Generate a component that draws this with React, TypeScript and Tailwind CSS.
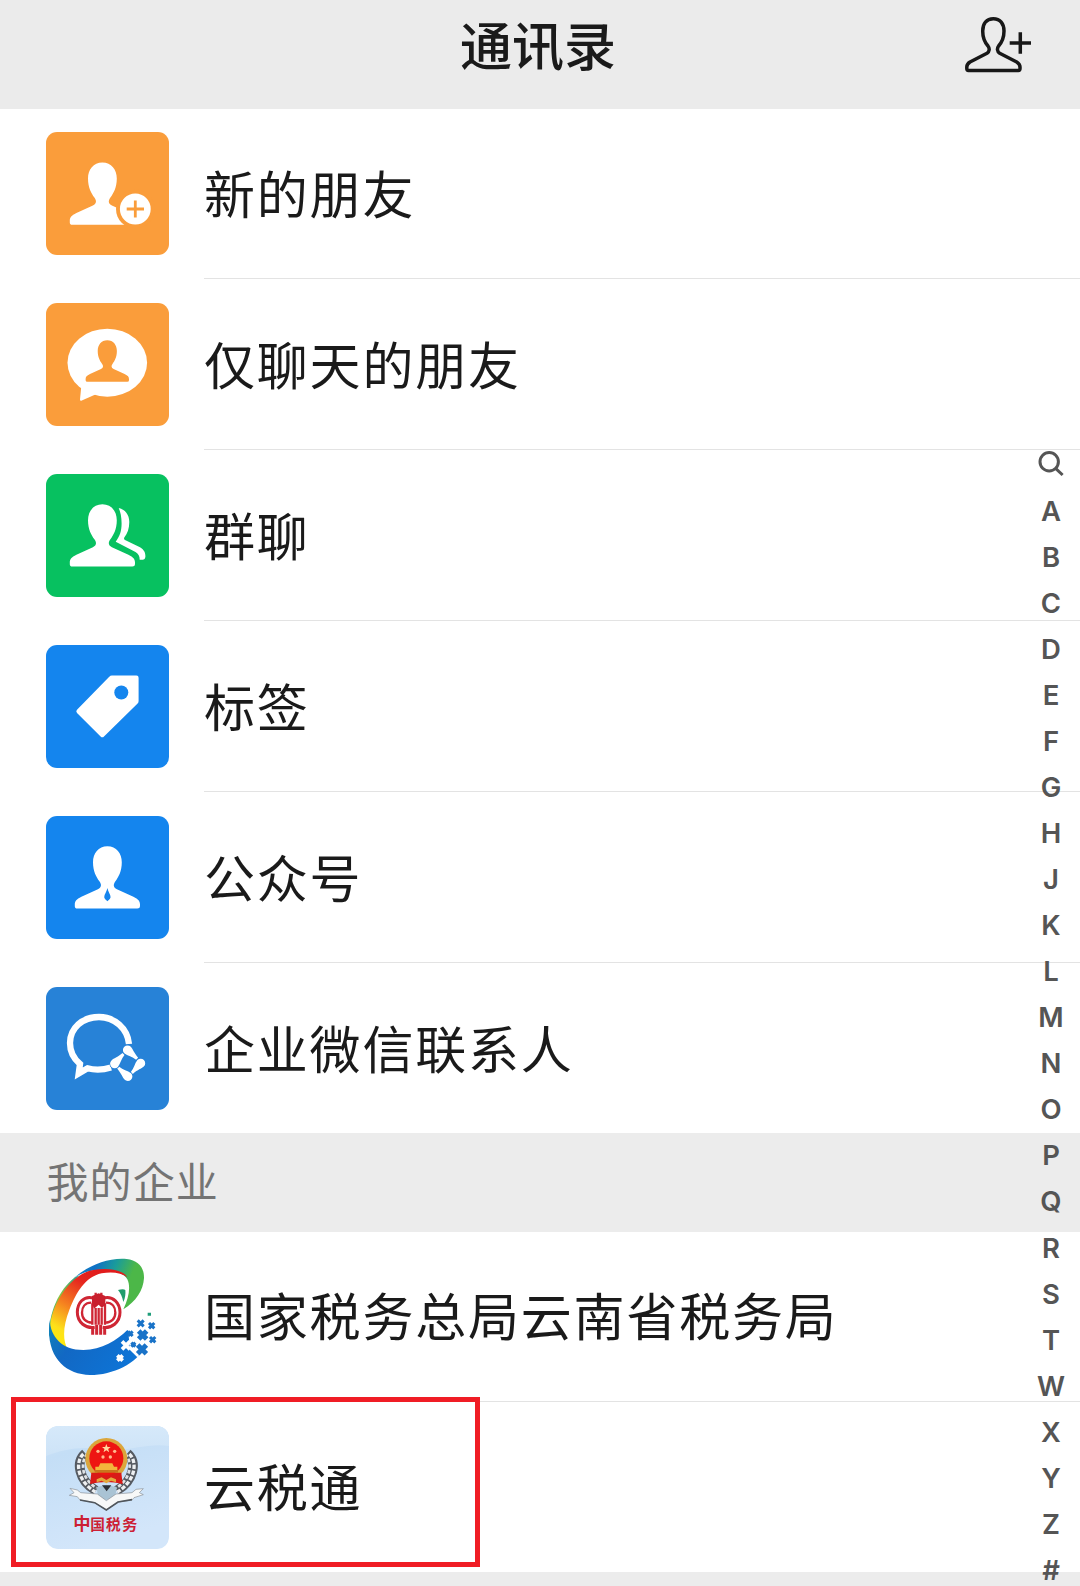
import type { ReactNode } from "react";

const LETTERS = "ABCDEFGHJKLMNOPQRSTWXYZ#".split("");

const PERSON =
	"M0 30C9 30 14.4 37 14.4 46C14.4 55 11 61 8 65C5.6 68.5 5.8 71 9.5 73L26 80.5C31 83 32.6 85 32.6 88V90Q32.6 92.3 30 92.3H-30Q-32.6 92.3 -32.6 90V88C-32.6 85 -31 83 -26 80.5L-9.5 73C-5.8 71 -5.6 68.5 -8 65C-11 61 -14.4 55 -14.4 46C-14.4 37 -9 30 0 30Z";

function AddContactIcon() {
	return (
		<svg className="h-20 w-[90px]" viewBox="0 0 90 80" fill="none" stroke="#181818" strokeWidth="3.5">
			<path
				strokeLinejoin="round"
				d="M38.3 13.7C31.5 13.7 27.7 18.8 27.7 26C27.7 33 30 37.6 33 41C34.8 43.3 34.6 46.6 32 48.3L15 57C12.5 58.6 11.8 60 11.8 62V63.5Q11.8 65.4 13.5 65.4H63.3Q65 65.4 65 63.5V62C65 60 64.2 58.6 61.7 57L44.7 48.3C42 46.6 41.9 43.3 43.6 41C46.6 37.6 49 33 49 26C49 18.8 45.2 13.7 38.3 13.7Z"
			/>
			<path d="M54.7 38.1H76M65.3 27.3V48.7" />
		</svg>
	);
}

function NewFriendIcon() {
	return (
		<svg viewBox="0 0 123 123">
			<path d={PERSON} fill="#fff" transform="translate(56.4 .4)" />
			<circle cx="89.3" cy="77" r="19.3" fill="#fa9d3b" />
			<circle cx="89.3" cy="77" r="15.4" fill="#fff" />
			<path d="M80.7 77H98M89.3 68.5V85.5" stroke="#fa9d3b" strokeWidth="2.8" />
		</svg>
	);
}

function ChatOnlyIcon() {
	return (
		<svg viewBox="0 0 123 123">
			<ellipse cx="61.3" cy="59.7" rx="39.8" ry="34" fill="#fff" />
			<path d="M35.5 81L34 96.5Q34 98.3 35.8 97.6L50 91.3Z" fill="#fff" />
			<path d={PERSON} fill="#fa9d3b" transform="translate(61.3 17.4) scale(.665)" />
		</svg>
	);
}

function GroupIcon() {
	return (
		<svg viewBox="0 0 123 123" fill="#fff">
			<path d={PERSON} transform="translate(56.4 .3)" />
			<path d="M72.7 34C79 35.5 83.3 40.5 83.3 48C83.3 54.5 81.5 59.5 78.3 63.5C77.8 64.5 78 65.3 79 66L94 73.3C98.3 76 99.6 79 99.4 83Q99 85.8 97 85.8H93.7C93.7 82 92.5 79.8 89.5 78L69.7 67.7C73.5 62.5 75.6 57.5 75.6 49.5C75.6 43 74.5 38 72.7 34Z" />
		</svg>
	);
}

function TagIcon() {
	return (
		<svg viewBox="0 0 123 123">
			<path
				d="M66 30.6H90.5Q92.6 30.6 92.6 32.7V56Q92.6 57.5 91.6 58.6L58 91.5Q56.3 93.2 54.6 91.5L31 68Q29.5 66.3 31 64.7L63 32Q64.3 30.6 66 30.6Z"
				fill="#fff"
			/>
			<circle cx="75.3" cy="47.5" r="7" fill="#1485ee" />
		</svg>
	);
}

function OfficialIcon() {
	return (
		<svg viewBox="0 0 123 123">
			<path d={PERSON} fill="#fff" transform="translate(61.4 .2)" />
			<path d="M61.4 72C62 75.5 64.6 78.5 64.6 81.2Q64.2 83.6 61.4 85.3Q58.6 83.6 58.2 81.2C58.2 78.5 60.8 75.5 61.4 72Z" fill="#1485ee" />
		</svg>
	);
}

function WeComIcon() {
	const drop = "M0 -4.6A4.6 4.6 0 0 1 4.6 0C4.4 3.5 2.8 6 2.2 13H-.6C-1 8 -4 4.5 -4.6 0A4.6 4.6 0 0 1 0 -4.6Z";
	return (
		<svg viewBox="0 0 123 123">
			<path
				d="M83 57C81.5 41.5 68.5 30 53 30C36.5 30 24 41 24 56C24 65 27.5 71.5 34 77L32.7 86.5L41.5 81.3C49 83.3 57 83 65 80.6"
				fill="none"
				stroke="#fff"
				strokeWidth="6.3"
			/>
			<g fill="#fff" stroke="#2782d7" strokeWidth="1.2" paintOrder="stroke">
				<path d={drop} transform="translate(81.5 63) rotate(-44)" />
				<path d={drop} transform="translate(94.6 76.3) rotate(46)" />
				<path d={drop} transform="translate(81.8 89.4) rotate(136)" />
				<path d={drop} transform="translate(68.7 76.7) rotate(-134)" />
			</g>
		</svg>
	);
}

function YunnanTaxLogo() {
	return (
		<svg viewBox="48 48 369 369">
			<defs>
				<linearGradient id="band" x1="0" y1="1" x2="0.6" y2="0">
					<stop offset="0" stopColor="#fff200" />
					<stop offset="0.25" stopColor="#fde01a" />
					<stop offset="0.5" stopColor="#f58220" />
					<stop offset="0.8" stopColor="#e6261f" />
					<stop offset="1" stopColor="#e11b1b" />
				</linearGradient>
				<linearGradient id="cap" x1="0" y1="0" x2="1" y2="0.3">
					<stop offset="0" stopColor="#1a9ac0" />
					<stop offset="0.35" stopColor="#0f6fc5" />
					<stop offset="0.6" stopColor="#1a9c9a" />
					<stop offset="0.85" stopColor="#4cb748" />
				</linearGradient>
				<linearGradient id="left" x1="1" y1="0" x2="0" y2="1">
					<stop offset="0" stopColor="#2a9d8f" />
					<stop offset="0.5" stopColor="#8cc63f" />
					<stop offset="1" stopColor="#00a99d" />
				</linearGradient>
				<linearGradient id="base" x1="0" y1="0" x2="1" y2="0.4">
					<stop offset="0" stopColor="#0f83b8" />
					<stop offset="0.35" stopColor="#1268c4" />
					<stop offset="1" stopColor="#0d74d6" />
				</linearGradient>
			</defs>
			<path d="M120 125C165 80 230 52 290 57C325 61 343 82 342 115C340 150 318 185 280 208C296 175 303 140 292 118C280 96 245 88 205 90C165 93 140 105 120 125Z" fill="url(#cap)" />
			<path d="M150 105C105 150 70 200 62 280L57 290C56 220 85 150 135 112Z" fill="url(#left)" />
			<path d="M292 112C280 90 235 82 190 90C130 98 66 185 60 258C62 300 80 325 114 330C96 300 100 255 118 210C140 155 165 112 215 100C245 94 275 98 292 112Z" fill="url(#band)" />
			<path d="M59 240C62 290 95 330 160 330C215 330 262 300 292 270L345 320C320 370 250 405 180 405C105 403 45 350 59 240Z" fill="url(#base)" />
			<path d="M264 150Q280 146 286 150Q288 170 280 186Q276 164 264 150Z" fill="#1f9d6c" />
			{/* coin emblem */}
			<g fill="none" stroke="#cf2634">
				<path d="M190 174C160 166 142 190 142 217C142 248 168 266 194 262M220 174C250 166 270 190 270 217C270 248 244 266 218 262" strokeWidth="9" />
				<path d="M184 188C164 188 156 202 156 218C156 236 168 248 186 248M228 188C248 188 256 202 256 218C256 236 244 248 226 248" strokeWidth="7" />
				<path d="M187 190V254M197 158V176M214 158V176M197 204V254M206 204V254M215 204V254M225 190V254" strokeWidth="7" />
				<path d="M188 258V284M200 254V284M212 254V284M224 258V284" strokeWidth="9" />
			</g>
			<path d="M186 168L206 160L226 168V194L216 204L206 194L192 206L186 190Z" fill="#c91f2d" />
			{/* puzzle pixels */}
			<path d="M294 266L322 262L346 322L322 352L300 330Z" fill="#fff" />
			<g stroke="#fff" strokeWidth="11">
				<path d="M276 304L300 328M300 304L276 328" />
				<path d="M262 346L278 362M278 346L262 362" />
			</g>
			<g stroke="#1a73c8" strokeWidth="9">
				<path d="M323 241L341 259M341 241L323 259M357 249L373 265M373 249L357 265M360 291L376 307M376 291L360 307M294 274L308 288M308 274L294 288M304 308L316 320M316 308L304 320" />
				<path d="M326 273L350 297M350 273L326 297M323 315L349 341M349 315L323 341" strokeWidth="15" />
			</g>
			<path d="M353 218H363V227H353Z" fill="#1f9d7a" />
		</svg>
	);
}

function ChinaTaxLogo() {
	return (
		<svg className="rounded-[12px]" viewBox="-42 0 369 369">
			<defs>
				<linearGradient id="sky" x1="0" y1="0" x2="0.3" y2="1">
					<stop offset="0" stopColor="#cfe4f7" />
					<stop offset="0.25" stopColor="#c4def6" />
					<stop offset="1" stopColor="#d3e6fa" />
				</linearGradient>
				<linearGradient id="haze" x1="0" y1="0" x2="0" y2="1">
					<stop offset="0" stopColor="#d6e9fa" />
					<stop offset="1" stopColor="#cde3f7" />
				</linearGradient>
			</defs>
			<path d="M-42 0H327V369H-42Z" fill="url(#sky)" />
			<path d="M-42 0H327V60C260 50 200 80 130 70C60 60 10 70 -42 90Z" fill="url(#haze)" />
			{/* wheat ears */}
			<g fill="none">
				<path d="M76 82C46 108 56 164 108 194M202 82C232 108 222 164 170 194" stroke="#565b62" strokeWidth="29" />
				<path d="M70 84C44 108 52 166 106 198M208 84C234 108 226 166 172 198" stroke="#eef0f2" strokeWidth="10" strokeDasharray="13 5" />
				<path d="M82 84C60 108 64 160 110 186M196 84C218 108 214 160 168 186" stroke="#dfe2e5" strokeWidth="8" strokeDasharray="11 6" />
			</g>
			{/* national emblem */}
			<circle cx="139" cy="99" r="63" fill="#dba63c" />
			<path d="M94 140L90 174Q139 162 188 174L184 140Z" fill="#d91a17" />
			<circle cx="139" cy="97" r="51" fill="#ee1512" />
			<path d="M139 54L142.500 63H152L144.500 69L147.500 79L139 73L130.500 79L133.500 69L126 63H135.500Z" fill="#ffd8a0" />
			<g fill="#ffb98c">
				<circle cx="114" cy="76" r="5" />
				<circle cx="164" cy="76" r="5" />
				<circle cx="129" cy="93" r="5" />
				<circle cx="151" cy="93" r="5" />
			</g>
			<path d="M121 112H157L162 122H172V132H106V122H116Z" fill="#f3b63c" />
			<path d="M104 132H174V140H104Z" fill="#c9761d" />
			<path d="M110 160L125 154L139 162L153 154L168 160V169L153 164L139 172L125 164L110 169Z" fill="#e3a83c" />
			<path d="M110 184L139 176L170 184L166 212L139 222L114 212Z" fill="#a9c3d4" />
			<path d="M126 178H154L140 196Z" fill="#2c3036" />
			{/* ribbon */}
			<path d="M30 187L52 192L62 200L112 204L139 224L168 204L216 200L228 190L250 188L238 200L250 206L222 215L216 222L174 228L139 252L104 230L60 222L52 212L28 208L42 200Z" fill="#f7f8f8" stroke="#8a9096" strokeWidth="2" />
			<path d="M60 222L104 230L139 252L174 228L216 221" fill="none" stroke="#50565c" strokeWidth="5" />
			<text x="40" y="313" fill="#cc1f35" fontSize="46" fontWeight="700">
				<tspan fontSize="52">中</tspan>
				<tspan x="91" y="312" fontSize="44">国</tspan>
				<tspan x="138" fontSize="44">税</tspan>
				<tspan x="186">务</tspan>
			</text>
		</svg>
	);
}

function Row({ icon, tile = "", label, labelPad = "pb-px", last = false, children }: {
	icon: ReactNode;
	tile?: string;
	label: string;
	labelPad?: string;
	last?: boolean;
	children?: ReactNode;
}) {
	return (
		<li className="relative flex flex-1 items-stretch pl-[46px]">
			<div className={`size-[123px] shrink-0 self-center overflow-hidden rounded-[11px] ${tile}`}>{icon}</div>
			<div className={`ml-[35px] flex flex-1 items-center text-[51px] leading-none tracking-[1.8px] ${labelPad} ${last ? "" : "border-b border-[#e3e3e3]"}`}>
				{label}
			</div>
			{children}
		</li>
	);
}

export default function App() {
	return (
		<div className="relative flex h-[1586px] w-[1080px] flex-col overflow-hidden bg-[#ececec] font-['Noto_Sans_CJK_SC',sans-serif] text-[#1a1a1a]">
			<header className="grid h-[108.5px] shrink-0 grid-cols-[1fr_auto_1fr] bg-[#ebebeb]">
				<h1 className="col-start-2 pt-[18px] pr-1 text-[52px] leading-[52px] font-medium">通讯录</h1>
				<div className="flex justify-end pt-[5px] pr-[35px]">
					<AddContactIcon />
				</div>
			</header>

			<ul className="flex h-[1024.9px] shrink-0 flex-col bg-white">
				<Row icon={<NewFriendIcon />} tile="bg-[#fa9d3b]" label="新的朋友" />
				<Row icon={<ChatOnlyIcon />} tile="bg-[#fa9d3b]" label="仅聊天的朋友" />
				<Row icon={<GroupIcon />} tile="bg-[#07c160]" label="群聊" />
				<Row icon={<TagIcon />} tile="bg-[#1485ee]" label="标签" />
				<Row icon={<OfficialIcon />} tile="bg-[#1485ee]" label="公众号" />
				<Row icon={<WeComIcon />} tile="mt-0.5 bg-[#2782d7]" label="企业微信联系人" last />
			</ul>

			<h2 className="flex h-[99px] shrink-0 items-center pb-[5px] pl-[46.5px] text-[42px] leading-none tracking-[1.1px] text-[#747474]">
				我的企业
			</h2>

			<ul className="flex h-[340px] shrink-0 flex-col bg-white">
				<Row icon={<YunnanTaxLogo />} label="国家税务总局云南省税务局" labelPad="pb-1" />
				<Row icon={<ChinaTaxLogo />} label="云税通" labelPad="pb-1" last>
					<div className="absolute top-[-5px] left-[10.5px] h-[170px] w-[469px] border-5 border-[#f01d25]" />
				</Row>
			</ul>

			{/* alphabet index floats above the list */}
			<nav className="absolute top-[439.5px] right-0 flex w-[59px] flex-col items-center font-['Inter',sans-serif] text-[27.5px] font-semibold text-[#555]">
				<svg className="h-12 w-[26px]" viewBox="0 0 26 48" fill="none" stroke="#555" strokeWidth="3">
					<circle cx="11.2" cy="21.8" r="9.2" />
					<path d="M17.6 28.3L24.6 35" />
				</svg>
				{LETTERS.map((letter) => (
					<span key={letter} className="h-[46.07px] pl-px leading-[46.07px]">{letter}</span>
				))}
			</nav>
		</div>
	);
}
